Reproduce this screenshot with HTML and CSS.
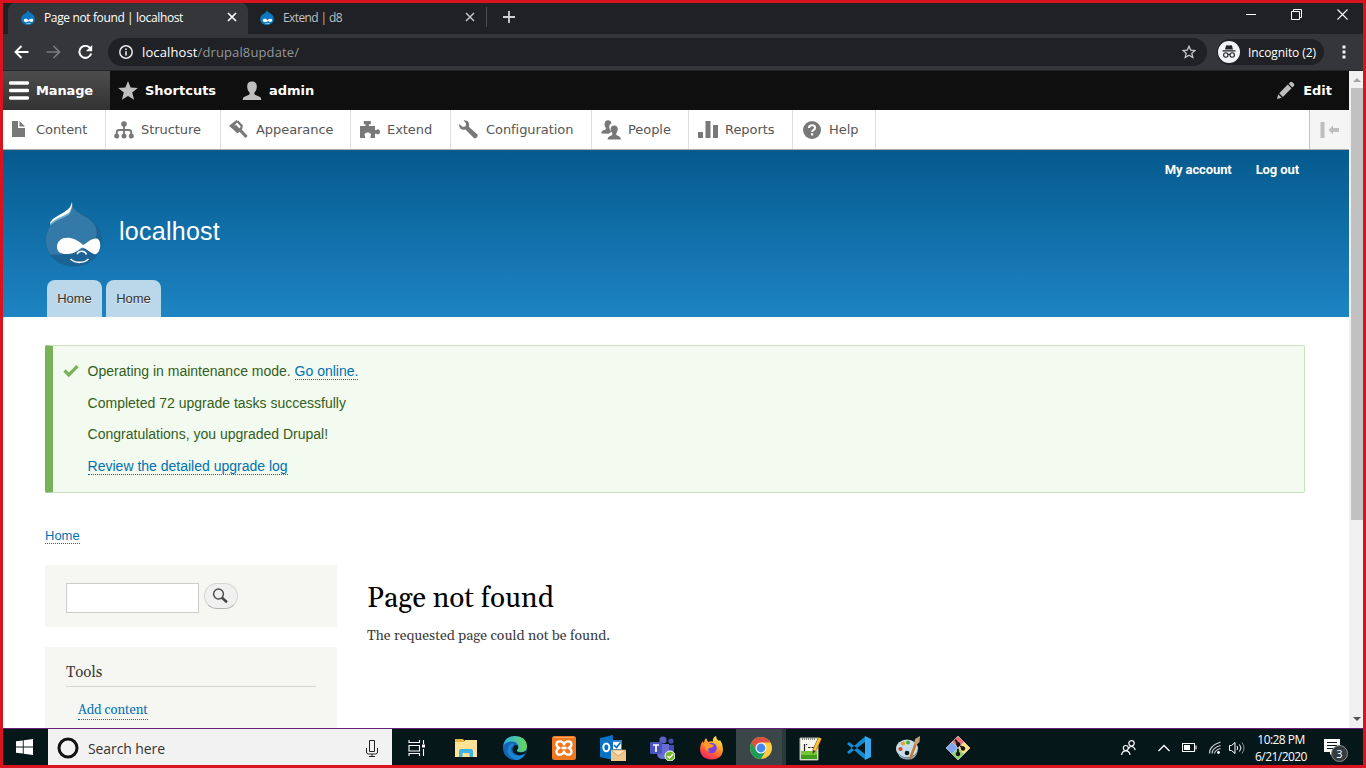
FILE: index.html
```html
<!DOCTYPE html>
<html lang="en">
<head>
<meta charset="utf-8">
<title>Page not found | localhost</title>
<link rel="stylesheet" href="styles.css">
</head>
<body>
<svg class="defs" width="0" height="0" aria-hidden="true">
  <symbol id="favicon" viewBox="0 0 14 15"><path d="M7 0c.4 2 2.200 2.400 4.200 4.100C13 5.600 13.800 7 13.800 9c0 3.500-3 6-6.800 6S.2 12.500.2 9c0-2 1-3.500 2.600-4.700C4.700 3 6.600 2.300 7 0z" fill="#0b78bf"/><path d="M2.800 10.300c0-1.700 2.800-2.100 4.800-.1 1.700-1.600 4.600-2 4.600.1 0 2-2.100 2.200-4.100.8-2 1.700-5.300 1.500-5.300-.8z" fill="#fff"/><path d="M5 13c2 .8 3.400.7 5-.2-.8 1.600-4 1.800-5 .2z" fill="#fff"/></symbol>
</svg>
<div class="screen">
  <div class="tabstrip">
    <div class="tab tab-active"><svg class="fav" width="14" height="15"><use href="#favicon"/></svg><span class="tab-title">Page not found | localhost</span><svg class="close" width="10" height="10" viewBox="0 0 10 10"><path d="M1 1l8 8M9 1L1 9" stroke="#fff" stroke-width="1.700"/></svg></div>
    <div class="tab"><svg class="fav" width="14" height="15"><use href="#favicon"/></svg><span class="tab-title tab-title-short">Extend | d8</span><svg class="close" width="10" height="10" viewBox="0 0 10 10"><path d="M1 1l8 8M9 1L1 9" stroke="#c3c5c8" stroke-width="1.500"/></svg></div>
    <svg class="newtab" width="12" height="12" viewBox="0 0 12 12"><path d="M6 0v12M0 6h12" stroke="#d0d2d4" stroke-width="1.800"/></svg>
    <div class="window-buttons">
      <svg width="10" height="11" viewBox="0 0 10 11"><path d="M0 5.500h10" stroke="#fff"/></svg>
      <svg width="11" height="11" viewBox="0 0 11 11"><path d="M.5 2.500h8v8h-8zM2.500 2.500v-2h8v8h-2" fill="none" stroke="#fff"/></svg>
      <svg width="11" height="11" viewBox="0 0 11 11"><path d="M.5.500l10 10m0-10l-10 10" stroke="#fff" stroke-width="1.100"/></svg>
    </div>
  </div>

  <div class="toolbar">
    <svg width="15" height="14" viewBox="0 0 15 14"><path d="M14.500 7H1.500M7.500 1L1.500 7l6 6" fill="none" stroke="#fff" stroke-width="1.900"/></svg>
    <svg width="15" height="14" viewBox="0 0 15 14"><path d="M.5 7h13M7.500 1l6 6-6 6" fill="none" stroke="#7b7c7f" stroke-width="1.700"/></svg>
    <svg width="15" height="14" viewBox="0 0 15 14"><path d="M12.200 3.200A6 6 0 1 0 13.200 8.500" fill="none" stroke="#fff" stroke-width="2"/><path d="M14.200 0v6.300H7.900z" fill="#fff"/></svg>
    <div class="omnibox">
      <svg width="14" height="14" viewBox="0 0 14 14"><circle cx="7" cy="7" r="6.200" fill="none" stroke="#e8eaed" stroke-width="1.500"/><path d="M6.200 6.200h1.600v4.300H6.200zM6.200 3.400h1.600V5H6.200z" fill="#e8eaed"/></svg>
      <span class="url"><b>localhost</b>/drupal8update/</span>
      <svg width="14" height="14" viewBox="0 0 14 14"><path d="M7 1.200l1.700 3.900 4.300.4-3.200 2.800 1 4.200L7 10.300l-3.800 2.200 1-4.200L1 5.500l4.300-.4z" fill="none" stroke="#c5c7ca" stroke-width="1.300"/></svg>
    </div>
    <div class="incognito"><svg width="22" height="22" viewBox="0 0 22 22"><circle cx="11" cy="11" r="11" fill="#f1f3f4"/><path d="M7 8.500L8 4.800q.3-.8 1-.6l2 .4 2-.4q.8-.2 1 .6l1 3.700zM4.500 9.300h13v1.200h-13z" fill="#202124"/><circle cx="7.800" cy="14" r="2.200" fill="none" stroke="#202124" stroke-width="1.100"/><circle cx="14.200" cy="14" r="2.200" fill="none" stroke="#202124" stroke-width="1.100"/><path d="M9.800 13.600q1.200-.6 2.400 0" stroke="#202124" fill="none"/></svg><span>Incognito (2)</span></div>
    <svg class="dots" width="4" height="14" viewBox="0 0 4 14"><path d="M.5.500h3v3h-3zm0 5h3v3h-3zm0 5h3v3h-3z" fill="#f1f3f4"/></svg>
  </div>

  <div class="viewport">
    <div class="page">
      <div class="admin-bar">
        <a class="admin-item admin-manage"><svg width="20" height="19" viewBox="0 0 20 19"><path d="M1.500 2h17m-17 7.500h17m-17 7.500h17" stroke="#fff" stroke-width="3.400" stroke-linecap="round"/></svg>Manage</a>
        <a class="admin-item admin-shortcuts"><svg width="20" height="19" viewBox="0 0 20 19"><path d="M10 0l2.600 6.600 7.200.5-5.600 4.500 1.900 7.200L10 14.900l-6.100 3.900 1.900-7.200L.2 7.100l7.200-.5z" fill="#bebebe"/></svg>Shortcuts</a>
        <a class="admin-item admin-user"><svg width="20" height="20" viewBox="0 0 20 20"><path d="M10 .5c3.500 0 5 2 4.800 5.500-.2 3-1.300 4.300-2.300 5.400-.6 1.200.1 2.300 1 2.700l4 1.600c1.400.6 1.700 1.500 1.700 3.300H.8c0-1.800.3-2.700 1.700-3.300l4-1.600c.9-.4 1.600-1.500 1-2.700C6.500 10.300 5.400 9 5.200 6 5 2.500 6.500.5 10 .5z" fill="#bebebe"/></svg>admin</a>
        <a class="admin-item admin-edit"><svg width="19" height="19" viewBox="0 0 19 19"><path d="M1 18l1.200-4.700 3.500 3.500zM3.200 12.200l8.600-8.600 3.700 3.700-8.600 8.600zM12.700 2.700l1.500-1.500q1-1 2.100 0l1.600 1.600q1 1 0 2.100l-1.500 1.500z" fill="#bebebe"/></svg>Edit</a>
      </div>
      <div class="tray">
        <a class="menu menu-content"><svg width="14" height="17" viewBox="0 0 14 17"><path d="M0 0h6v7h7v9H0zM7.500 0L13 5.500H7.500z" fill="#787878"/></svg>Content</a>
        <a class="menu menu-structure"><svg width="20" height="18" viewBox="0 0 20 18"><g fill="#787878"><circle cx="10" cy="3" r="2.800"/><circle cx="2.700" cy="15" r="2.500"/><circle cx="10" cy="15" r="2.500"/><circle cx="17.300" cy="15" r="2.500"/></g><path d="M10 4v10M2.700 14v-2.500q0-2.500 2.500-2.500h9.600q2.500 0 2.500 2.500V14" fill="none" stroke="#787878" stroke-width="1.900"/></svg>Structure</a>
        <a class="menu menu-appearance"><svg width="19" height="19" viewBox="0 0 19 19"><path d="M7.500 0l1 1 .800-.6L14 5.500 13 9.500l-3.500 3.200q-1 .8-2-.2L0 5.800z" fill="#787878"/><path d="M8 2.600l3.800 4-1.300 2L7.200 5.100l-2 .6L8 2.600z" fill="#fff"/><path d="M11.500 10.500l6 6.500" stroke="#787878" stroke-width="3.200"/></svg>Appearance</a>
        <a class="menu menu-extend"><svg width="20" height="18" viewBox="0 0 20 18"><path d="M0 5h5.500V3.300H3.800V0h7v3.300H9V5h6v4h1.500c.3-1 3.500-1.200 3.500 1.800s-3.200 2.900-3.500 1.900H15V17h-4.500v-2c1.200-1.200.3-3.500-2.700-3.500s-3.900 2.300-2.700 3.500v2H0z" fill="#787878"/></svg>Extend</a>
        <a class="menu menu-config"><svg width="19" height="19" viewBox="0 0 19 19"><path d="M4.500.2Q9 0 10 3.300q.5 2-.2 3.500l8.400 7.500q1 1 .2 2.300-1 2-3 2l-9-9Q3 10.500 1.200 8.200-.2 6.500.3 4l3.500 3 2.900-.7.3-2.700z" fill="#787878"/></svg>Configuration</a>
        <a class="menu menu-people"><svg width="20" height="20" viewBox="0 0 20 20"><path d="M7 .2q3.200 0 3.500 3-2.500 1-2.200 4 .2 2.300 1.500 3.700l.3 1.200-2.500 1.700-7.400-.2q0-2.500 1.800-3l2.400-1q1-.7.200-1.800Q3.400 6.700 3.500 4 3.800.2 7 .2z" fill="#787878"/><path d="M13.200 5.500q4 .2 3.500 4.300-.2 2-1.300 3.300-.8 1.400.3 2.200l2.300 1q1.800.7 2 3.300H6.500q.2-2.600 2-3.300l2.300-1q1.100-.8.300-2.200Q9.900 11.800 9.700 9.800q-.5-4.100 3.500-4.300z" fill="#787878"/></svg>People</a>
        <a class="menu menu-reports"><svg width="20" height="18" viewBox="0 0 20 18"><path d="M0 11h5v6H0zM7.500 0h5v17h-5zM15 4h5v13h-5z" fill="#787878"/></svg>Reports</a>
        <a class="menu menu-help"><svg width="18" height="18" viewBox="0 0 18 18"><circle cx="9" cy="9" r="9" fill="#787878"/><path d="M5.900 7Q6 4.200 9.100 4.200q3 0 3 2.500 0 1.200-1.400 2.100Q9.100 9.700 9.100 11" fill="none" stroke="#fff" stroke-width="2.100"/><path d="M8 12.200h2.200v2.200H8z" fill="#fff"/></svg>Help</a>
        <div class="orient"><svg width="20" height="16" viewBox="0 0 20 16"><path d="M.5 0h4v16h-4zM8.500 8L13 3.500V6h6v4h-6v2.500z" fill="#bebebe"/></svg></div>
      </div>

      <header class="hero">
        <nav class="account"><a>My account</a><a>Log out</a></nav>
        <div class="brand">
          <svg class="logo" width="58" height="65" viewBox="0 0 58 65"><path d="M27 0c1 6.500 5 8.500 14 14 9 5.600 16 13 16 24.500C57 54 44.500 64.500 29 64.500S.7 54 .7 38.500C.7 28 6 20.500 15 15.500c6.500-4 11.500-9 12-15.500z" fill="#1c6294"/><path d="M27 2c1 5.500 5.500 8.500 14 13 9.500 5.500 13 14 9 22-3 6-9 10-17 12-10 3-19 4-28 3.500C-3 39 1 25 12 18c7-4 14-8 15-16z" fill="#347aa8"/><path d="M27 0c1 3-.5 9-2.500 12-4 4-12 4.500-19.500 12 .5-5 4-7 10-10.500 6.500-4 11-7 12-13.500z" fill="#7bacc9"/><path d="M27 0c.500 3-.5 7-2.500 10-4 4-13 5-19.500 12 .5-4 4-6 10-9.500C21.500 9 26 6 27 0z" fill="#fff"/><path d="M12 45c0-11 15-13 26-2 4-2 9-7.500 14-6.500 6 2 3 18-3 15.500-5-2-7-5-11.500-6.500-4 2-7.500 6.500-14.500 6.500-7 .5-11-2-11-7z" fill="#fff"/><path d="M32 52c2-3.500 8-4 9.500.5M25.500 57c5 4.500 13 4.500 18 0" fill="none" stroke="#fff" stroke-width="1.600"/></svg>
          <span class="site-name">localhost</span>
        </div>
        <nav class="main-tabs"><a>Home</a><a>Home</a></nav>
      </header>

      <main class="content">
        <div class="message">
          <svg class="check" width="16" height="14" viewBox="0 0 16 14"><path d="M1.500 6.500l4.300 4.300 8.700-8.700" fill="none" stroke="#77b259" stroke-width="3.300"/></svg>
          <ul><li>Operating in maintenance mode. <a class="link">Go online.</a></li><li>Completed 72 upgrade tasks successfully</li><li>Congratulations, you upgraded Drupal!</li><li><a class="link">Review the detailed upgrade log</a></li></ul>
        </div>
        <nav class="crumbs"><a class="link">Home</a></nav>
        <div class="columns">
          <aside class="sidebar">
            <form class="block search"><input class="search-input" type="text" aria-label="Search"><button class="search-button" type="button" aria-label="Search"><svg width="17" height="17" viewBox="0 0 17 17"><circle cx="6.500" cy="6" r="4.900" fill="none" stroke="#505050" stroke-width="1.500"/><path d="M10 9.700l5 4.500" stroke="#444" stroke-width="2.500"/></svg></button></form>
            <section class="block tools"><h2>Tools</h2><a class="link">Add content</a></section>
          </aside>
          <article class="article"><h1>Page not found</h1><p>The requested page could not be found.</p></article>
        </div>
      </main>
    </div>
    <div class="scrollbar"><svg width="8" height="4" viewBox="0 0 8 4"><path d="M0 4l4-4 4 4z" fill="#a3a3a3"/></svg><div class="thumb"></div><svg class="down" width="8" height="4" viewBox="0 0 8 4"><path d="M0 0l4 4 4-4z" fill="#505050"/></svg></div>
  </div>

  <div class="taskbar">
    <div class="start"><svg width="17" height="16" viewBox="0 0 17 16"><path d="M0 2.300L6.800 1.400v6.100H0zM7.700 1.200L17 0v7.500H7.700zM0 8.400h6.800v6.200L0 13.700zM7.700 8.400H17V16l-9.300-1.300z" fill="#fff"/></svg></div>
    <div class="find"><svg width="22" height="22" viewBox="0 0 22 22"><circle cx="11" cy="11" r="9" fill="none" stroke="#111" stroke-width="3"/></svg><span>Search here</span><svg width="12" height="17" viewBox="0 0 12 17"><path d="M3.500.500h5v11h-5zM.5 8v4q0 2 2 2h7q2 0 2-2V8M6 14v2.500M3 16.500h6" fill="none" stroke="#222"/></svg></div>
    <div class="app"><svg width="18" height="16" viewBox="0 0 18 16"><path d="M1 0v2.500h10.500V0M1 16v-2.500h10.500V16M1 5.500h10.500v5.500H1zM15.500 0v4M15.500 9v7" fill="none" stroke="#fff" stroke-width="1.100"/><path d="M14 4.500h3v3h-3z" fill="#fff"/></svg></div>
    <div class="app"><svg width="22" height="20" viewBox="0 0 22 20"><path d="M0 1h8l1.500 2H20v4H0z" fill="#e5b746"/><path d="M0 4h9l1-2h12v17H0z" fill="#ffe394"/><path d="M4 19v-6q0-2 2-2h10q2 0 2 2v6h-3.500v-4h-7v4z" fill="#3eb1e8"/></svg></div>
    <div class="app"><svg width="24" height="24" viewBox="0 0 24 24"><defs><linearGradient id="eg" x1="0" x2="1"><stop offset="0" stop-color="#2bb0e8"/><stop offset="1" stop-color="#69d65b"/></linearGradient></defs><circle cx="12" cy="12" r="12" fill="#1465b5"/><path d="M0 11Q1 0 12 0q11 0 12 10 0 6-6 6-5 0-4-2 2-2 1-5-2-4-7-3.500Q2 6 0 11z" fill="url(#eg)"/><path d="M9 7q-6 4-4 10 2 5 8 7 6 0 9-6-8 4-13-1-3-4 2-9z" fill="#1b86d3"/><path d="M11 10q-3 4 0 7 4 4 11 .5l2-3.500q-3 2.500-6 2.500-5 0-4-2.500 2-2 1-4-2-2-4 0z" fill="#061719"/></svg></div>
    <div class="app"><svg width="24" height="24" viewBox="0 0 24 24"><rect width="24" height="24" rx="2.500" fill="#ee781f"/><path d="M1.500 1.500h21" stroke="#f7a869"/><path d="M12 8.500Q11 5.300 8 5.300q-3.500 0-3.500 3 0 2.700 3 3.700-3 1-3 3.700 0 3 3.500 3 3 0 4-3.200 1 3.200 4 3.200 3.500 0 3.500-3 0-2.700-3-3.700 3-1 3-3.700 0-3-3.500-3-3 0-4 3.200zM9.500 12h5" fill="none" stroke="#fff" stroke-width="2.300" stroke-linejoin="round"/></svg></div>
    <div class="app"><svg width="26" height="26" viewBox="0 0 26 26"><path d="M11 5h11v15H11z" fill="#3485cc"/><path d="M13 7h8v7h-8z" fill="#fff"/><path d="M14 10l2.500 2.500 4-5" fill="none" stroke="#0873c5" stroke-width="1.700"/><path d="M0 3l13-3v25L0 22z" fill="#0873c5"/><ellipse cx="6.300" cy="12.300" rx="3" ry="3.900" fill="none" stroke="#fff" stroke-width="2"/><path d="M11 15h15v11H11z" fill="#efc88e"/><path d="M11 15l7.500 6 7.500-6z" fill="#fbe4bd" stroke="#c59452" stroke-width=".7"/></svg></div>
    <div class="app"><svg width="25" height="25" viewBox="0 0 25 25"><circle cx="13" cy="4" r="3.600" fill="#5b62c4"/><circle cx="21" cy="5" r="2.600" fill="#464eb0"/><path d="M17 9h7v8q0 5-5 5z" fill="#464eb0"/><path d="M7 8h12v9q0 6-6 6t-6-6z" fill="#666ed6"/><rect y="6" width="12" height="12" rx="1" fill="#4b53bc"/><path d="M3 9h6M6 9v7" stroke="#fff" stroke-width="1.700"/><circle cx="20" cy="20" r="5" fill="#72b629" stroke="#fff"/><path d="M17.500 20l2 2 3.500-4" fill="none" stroke="#fff" stroke-width="1.400"/></svg></div>
    <div class="app"><svg width="24" height="24" viewBox="0 0 24 24"><defs><linearGradient id="fx" x1=".8" y1="0" x2=".3" y2="1"><stop stop-color="#fff04a"/><stop offset=".4" stop-color="#ffa62b"/><stop offset=".75" stop-color="#ff4f3d"/><stop offset="1" stop-color="#ee2466"/></linearGradient></defs><path d="M6 2l2 4q3-1 5-.500Q12 2 16 0q0 3 3 5l1-1q3 4 3 9 0 10-11.500 10.500Q0 23 0 12 0 8 3 5q0 2 1 2 0-3 2-5z" fill="url(#fx)"/><circle cx="11.500" cy="12" r="5.300" fill="#7542df"/><path d="M3 7q5-2 7 1l4 1q-1 3-5 3-2 2 1 4-5-1-5-5z" fill="#ff9928"/></svg></div>
    <div class="app app-active"><svg width="22" height="22" viewBox="0 0 22 22"><circle cx="11" cy="11" r="11" fill="#ffcd42"/><path d="M1.500 5.500A11 11 0 0 1 20.500 5.500H11L6.200 13.700z" fill="#df4e42"/><path d="M1.500 5.500A11 11 0 0 0 11 22l4.800-8.200L6.500 14z" fill="#1a9f5b"/><circle cx="11" cy="11" r="5.500" fill="#fff"/><circle cx="11" cy="11" r="4.400" fill="#4688f1"/></svg></div>
    <div class="app"><svg width="23" height="25" viewBox="0 0 23 25"><path d="M1 2h18v22H1z" fill="#f7f7ee" stroke="#b5b6a5"/><path d="M2 15h16v8H2z" fill="#76c438"/><path d="M2 19h16v4H2z" fill="#3e9d1b"/><path d="M3 3h14" stroke="#888" stroke-width="2" stroke-dasharray="1 1"/><path d="M5.500 8v7M7.500 8v1M9 11.500h2.500M12.500 11.500h2.500" stroke="#222" stroke-width="1.200"/><path d="M21 2l-6 13" stroke="#b96419" stroke-width="4"/><path d="M21 2l-6 13" stroke="#f8c73b" stroke-width="2.600"/><path d="M13.500 18l.5-4 2.500 1z" fill="#4c3520"/></svg></div>
    <div class="app"><svg width="24" height="24" viewBox="0 0 24 24"><path d="M0 8l2-2 16 12v5.500zM0 16l2 2L18 6V.5z" fill="#148bd2"/><path d="M18 0l6 3v18l-6 3z" fill="#35a7ed"/></svg></div>
    <div class="app"><svg width="25" height="24" viewBox="0 0 25 24"><ellipse cx="11" cy="12.500" rx="11" ry="9" fill="#c8ddea"/><path d="M2 17q4 5 10 4.500 8-1 10-7-2 10-11 9Q3 23 2 17z" fill="#8faabe"/><circle cx="4.500" cy="13" r="2.100" fill="#d9432a"/><circle cx="7" cy="7.500" r="2.100" fill="#dfa42d"/><circle cx="12" cy="6.500" r="2" fill="#4fae3b"/><circle cx="11" cy="17" r="2.300" fill="#061719"/><path d="M14 23l6-16" stroke="#c67b32" stroke-width="2.500"/><path d="M18 8l1-5 5-3-.500 6-3 3z" fill="#c2a279"/></svg></div>
    <div class="app"><svg width="24" height="24" viewBox="0 0 24 24"><path d="M12 0l6 6-6 6-6-6z" fill="#ec6f6f"/><path d="M6 6l6 6-6 6-6-6z" fill="#7fa4f0"/><path d="M18 6l6 6-6 6-6-6z" fill="#ffdf78"/><path d="M12 12l6 6-6 6-6-6z" fill="#91d06b"/><path d="M9 3.500l3 4v11M12 7.500l5 5" fill="none" stroke="#151515" stroke-width="1.800"/><path d="M6 6l6-6 6 6-6 6zM6 6l-6 6 6 6 6-6M18 6l6 6-6 6-6-6M6 18l6 6 6-6" fill="none" stroke="#f4f4f4" stroke-width=".6"/><circle cx="12" cy="8" r="2" fill="#151515"/><circle cx="12" cy="18" r="2.200" fill="#151515"/><circle cx="17" cy="12.500" r="2.200" fill="#151515"/></svg></div>
    <div class="system">
      <svg class="people-icon" width="15" height="16" viewBox="0 0 15 16"><g fill="none" stroke="#fff" stroke-width="1.200"><circle cx="10.500" cy="3.300" r="2.700"/><path d="M7.500 9q.5-2.500 3-2.500T14.300 10"/><circle cx="4.800" cy="8" r="2.500"/><path d="M.600 15q.4-4.200 4.200-4.200T9 15"/></g></svg>
      <svg class="chevron" width="12" height="8" viewBox="0 0 12 8"><path d="M.5 7L6 1.500 11.500 7" fill="none" stroke="#fff" stroke-width="1.300"/></svg>
      <svg class="battery" width="15" height="9" viewBox="0 0 15 9"><path d="M.5.500h12v8H.5zM14 2.500v4" fill="none" stroke="#fff" stroke-width="1.100"/><path d="M2 2h6v5H2z" fill="#fff"/></svg>
      <svg class="wifi" width="13" height="13" viewBox="0 0 13 13"><path d="M1.500 12.500Q1 5 12.500 1M4 12.500Q4 7 12.500 4.500M6.500 12.500Q7 9 12.500 7.500" fill="none" stroke="#d4dadc" stroke-width="1.100"/><circle cx="10.500" cy="11.500" r="1.400" fill="#fff"/></svg>
      <svg class="speaker" width="16" height="14" viewBox="0 0 16 14"><path d="M.5 4.500h2L6 1.500v11L2.500 9.500h-2z" fill="none" stroke="#fff"/><path d="M8 5q1.500 2 0 4M10.500 3.500q3 3.500 0 7" fill="none" stroke="#fff"/><path d="M13 1.500q4 5.500 0 11" fill="none" stroke="#87918f"/></svg>
      <div class="clock"><span>10:28 PM</span><span>6/21/2020</span></div>
      <div class="notice"><svg width="16" height="16" viewBox="0 0 16 16"><path d="M0 0h16v13H9l-3 3v-3H0z" fill="#fff"/><path d="M3 3.500h10M3 6.500h10M3 9.500h7" stroke="#09181b"/></svg><span class="badge">3</span></div>
    </div>
  </div>
</div>
</body>
</html>
```
FILE: styles.css
```css
* { box-sizing: border-box; }
body { margin: 0; overflow: hidden; }
svg { display: block; flex: none; }
.defs { position: absolute; }
.screen { width: 1366px; height: 768px; border: 3px solid #d91320; display: flex; flex-direction: column; overflow: hidden; font-family: "Open Sans", sans-serif; background: #fff; }

/* browser frame */
.tabstrip { height: 31px; flex: none; background: #202124; display: flex; align-items: center; padding-left: 5px; }
.tab { width: 239px; height: 31px; padding: 0 12px 3px 12px; display: flex; align-items: center; color: #bdc1c6; font-size: 12px; }
.tab-active { width: 240px; background: #35363a; color: #fff; border-radius: 7px 7px 0 0; padding: 0 11px 3px 13px; }
.tab-title { margin-left: 9px; letter-spacing: -0.37px; white-space: nowrap; }
.tab-title-short { letter-spacing: -0.6px; }
.close { margin-left: auto; }
.tab + .newtab { box-sizing: content-box; border-left: 1px solid #4c4d50; padding: 4px 0 4px 16px; margin: 0 0 3px -1px; }
.window-buttons { margin: 0 15px 8px auto; display: flex; gap: 35px; }
.toolbar { height: 37px; flex: none; background: #35363a; border-bottom: 1px solid #242527; display: flex; align-items: center; padding-left: 11px; gap: 17px; }
.omnibox { flex: none; width: 1099px; height: 28px; border-radius: 14px; background: #202124; margin-left: -2px; padding: 0 11px; display: flex; align-items: center; }
.url { flex: 1; margin-left: 9px; font-size: 13px; letter-spacing: 0.12px; color: #92969b; }
.url b { font-weight: 400; color: #fff; }
.incognito { flex: none; width: 107px; height: 26px; margin-left: -7px; border-radius: 13px; background: #202124; display: flex; align-items: center; padding-left: 1px; gap: 8px; color: #fff; font-size: 12px; letter-spacing: -0.1px; white-space: nowrap; }
.dots { margin-left: 1px; }

/* page and scrollbar */
.viewport { height: 657px; flex: none; display: flex; }
.page { width: 1346px; height: 657px; overflow: hidden; }
.scrollbar { width: 14px; background: #f1f1f1; display: flex; flex-direction: column; align-items: center; padding: 7px 0 7px 2px; }
.thumb { width: 12px; height: 432px; background: #c1c1c1; margin-top: 6px; }
.down { margin-top: auto; }

/* site administration toolbar */
.admin-bar { height: 39px; background: #0f0f0f; display: flex; font: bold 13px "DejaVu Sans", sans-serif; color: #fff; }
.admin-item { display: flex; align-items: center; }
.admin-manage { width: 107px; padding-left: 6px; gap: 7px; letter-spacing: -0.14px; background: linear-gradient(#4d4d4d, #333); }
.admin-shortcuts { width: 131px; padding-left: 8px; gap: 7px; }
.admin-user { padding-left: 1px; gap: 7px; }
.admin-edit { margin-left: auto; margin-right: 17px; gap: 8px; }
.tray { height: 40px; border-bottom: 1px solid #a7adb2; background: #fff; display: flex; font: 13px "DejaVu Sans", sans-serif; letter-spacing: -0.06px; color: #565656; }
.menu { flex: none; display: flex; align-items: center; border-right: 1px solid #ddd; }
.menu-content { width: 103px; padding-left: 9px; gap: 10px; }
.menu-structure { width: 115px; padding-left: 8px; gap: 7px; }
.menu-appearance { width: 130px; padding-left: 8px; gap: 8px; }
.menu-extend { width: 100px; padding-left: 9px; gap: 7px; }
.menu-config { width: 141px; padding-left: 8px; gap: 8px; }
.menu-people { width: 97px; padding-left: 9px; gap: 7px; }
.menu-reports { width: 104px; padding-left: 9px; gap: 7px; }
.menu-help { width: 83px; padding-left: 10px; gap: 8px; }
.orient { width: 40px; margin-left: auto; border-left: 1px solid #c5c5c5; background: #f5f5f5; display: flex; align-items: center; padding-left: 10px; }

/* site header */
.hero { height: 167px; background: linear-gradient(#055a8e, #1d84c3); display: flex; flex-direction: column; font-family: "Liberation Sans", Arial, sans-serif; color: #fff; }
.account { display: flex; justify-content: flex-end; gap: 24px; padding: 12px 50px 0 0; font: bold 13px/16px Roboto, sans-serif; letter-spacing: -0.1px; }
.brand { display: flex; padding: 24px 0 0 42px; }
.site-name { margin: 15px 0 0 16px; font-size: 25px; line-height: 29px; letter-spacing: 0.26px; }
.main-tabs { margin-top: auto; padding-left: 44px; display: flex; gap: 4px; }
.main-tabs a { width: 55px; height: 37px; border-radius: 8px 8px 0 0; background: #bbd8ea; color: #333; font-size: 13px; line-height: 37px; text-align: center; text-shadow: 0 1px #eee; }

/* content */
.content { width: 1302px; padding: 28px 0 0 42px; font-family: "Liberation Sans", Arial, sans-serif; }
.link { color: #0071b3; border-bottom: 1px dotted #0071b3; }
.message { height: 148px; border: 1px solid #c9e1bd; border-left: 8px solid #77b259; border-radius: 2px; background: #f3faef; color: #325e1c; display: flex; padding: 17px 0 0 10px; font-size: 14px; line-height: 16px; }
.check { margin-top: 1px; }
.message ul { list-style: none; margin: 0 0 0 8.600px; padding: 0; }
.message li { height: 31.600px; }
.message .link { display: inline-block; line-height: 16px; }
.crumbs { height: 72px; padding-top: 35px; font-size: 13px; line-height: 15px; }
.crumbs .link { display: inline-block; }
.columns { display: flex; gap: 30px; font-family: Georgia, Gelasio, serif; color: #3b3b3b; }
.sidebar { width: 292px; display: flex; flex-direction: column; gap: 20px; }
.block { background: #f6f6f2; margin: 0; }
.search { height: 62px; padding: 18px 21px; display: flex; gap: 5px; }
.search-input { width: 133px; height: 30px; border: 1px solid #ccc; background: #fff; padding: 0; }
.search-button { width: 34px; height: 26px; border: 1px solid #d6d6d6; border-bottom-color: #b4b4b4; border-radius: 13px; background: #f0f0f0; padding: 0 0 0 7px; }
.tools { height: 160px; padding: 17px 21px; }
.tools h2 { margin: 0 0 12px; height: 23px; border-bottom: 1px solid #d6d6d6; font-size: 15px; font-weight: 400; line-height: 18px; }
.tools .link { display: inline-block; margin-left: 12px; font-size: 13px; line-height: 17px; height: 18px; letter-spacing: -0.05px; }
.article h1 { margin: 17px 0 0; font-size: 28px; line-height: 34px; font-weight: 400; color: #000; }
.article p { margin: 10px 0 0; font-size: 14px; line-height: 20px; }

/* desktop taskbar */
.taskbar { height: 37px; flex: none; border-top: 1px solid #68217a; background: #061719; display: flex; color: #fff; }
.start { width: 45px; display: flex; align-items: center; justify-content: center; padding-right: 3px; }
.find { width: 344px; background: #f2f2f2; color: #333; display: flex; align-items: center; gap: 9px; padding: 2px 14px 0 9px; font-size: 14px; }
.find span { flex: 1; letter-spacing: -0.1px; }
.app { width: 49.200px; display: flex; align-items: center; justify-content: center; padding-top: 2px; }
.app-active { background: #3a4648; box-shadow: inset -4px 0 #2c393b; }
.system { margin-left: auto; display: flex; align-items: center; padding-top: 1px; }
.people-icon { margin-right: 22px; }
.chevron { margin-right: 12px; }
.battery { margin-right: 11px; }
.wifi { margin-right: 8px; }
.speaker { margin-right: 5px; }
.clock { width: 62px; display: flex; flex-direction: column; align-items: center; font-size: 12px; line-height: 17px; letter-spacing: -0.55px; margin-right: 12px; }
.notice { position: relative; width: 39px; height: 18px; }
.badge { position: absolute; left: 7px; top: 6px; width: 17px; height: 17px; border: 1px solid #8b9192; border-radius: 50%; background: #333b3d; font-size: 11px; line-height: 15px; text-align: center; }
```
